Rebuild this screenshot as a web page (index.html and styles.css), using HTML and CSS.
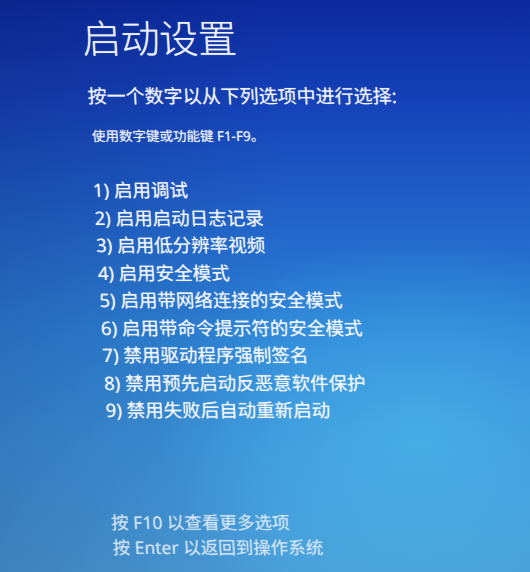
FILE: index.html
```html
<!DOCTYPE html>
<html lang="zh-CN">
<head>
<meta charset="utf-8">
<title>启动设置</title>
<link rel="stylesheet" href="styles.css">
</head>
<body>
<div class="screen">
  <div class="content">
    <h1 class="title">启动设置</h1>
    <p class="subtitle">按一个数字以从下列选项中进行选择:</p>
    <p class="hint">使用数字键或功能键 F1-F9。</p>
    <ol class="options">
      <li>1) 启用调试</li>
      <li>2) 启用启动日志记录</li>
      <li>3) 启用低分辨率视频</li>
      <li>4) 启用安全模式</li>
      <li>5) 启用带网络连接的安全模式</li>
      <li>6) 启用带命令提示符的安全模式</li>
      <li>7) 禁用驱动程序强制签名</li>
      <li>8) 禁用预先启动反恶意软件保护</li>
      <li>9) 禁用失败后自动重新启动</li>
    </ol>
    <div class="footer">
      <p>按 F10 以查看更多选项</p>
      <p>按 Enter 以返回到操作系统</p>
    </div>
  </div>
</div>
</body>
</html>
```

FILE: styles.css
```css
html, body {
  margin: 0;
  padding: 0;
}

body {
  width: 530px;
  height: 572px;
  overflow: hidden;
  font-family: "Noto Sans", "Noto Sans CJK SC", sans-serif;
}

.screen {
  width: 530px;
  height: 572px;
  overflow: hidden;
  background:
    radial-gradient(ellipse 260px 200px at 420px 440px, rgba(80, 200, 240, 0.5), rgba(80, 200, 240, 0)),
    linear-gradient(90deg, rgba(10, 20, 80, 0.2) 0%, rgba(10, 20, 80, 0) 55%),
    linear-gradient(180deg, #0b2a9e 0%, #1542b8 18%, #2268cc 40%, #2e84d7 58%, #3d94da 78%, #4a9dd8 100%);
}

.content {
  padding: 13px 0 0 81px;
  transform: skewX(3.3deg);
  transform-origin: 0 0;
  color: #eef3ff;
  text-shadow: 0 0 1px rgba(255, 255, 255, 0.55);
}

.title {
  margin: 0 0 0 -1px;
  font-family: "Noto Sans CJK SC", sans-serif;
  font-weight: 300;
  font-size: 39px;
  line-height: 46px;
  letter-spacing: -0.5px;
}

.subtitle {
  margin: 25px 0 0 1px;
  font-size: 19px;
  line-height: 24px;
}

.hint {
  margin: 18px 0 0 3px;
  font-size: 13.5px;
  line-height: 20px;
}

.options {
  list-style: none;
  margin: 30px 0 0 1px;
  padding: 0;
  font-size: 18.5px;
  line-height: 27.5px;
  color: #f2f6ff;
}

.footer {
  margin-top: 86px;
  font-size: 17.5px;
  line-height: 25px;
  color: rgba(222, 234, 250, 0.8);
}

.footer p {
  margin: 0;
}
```
